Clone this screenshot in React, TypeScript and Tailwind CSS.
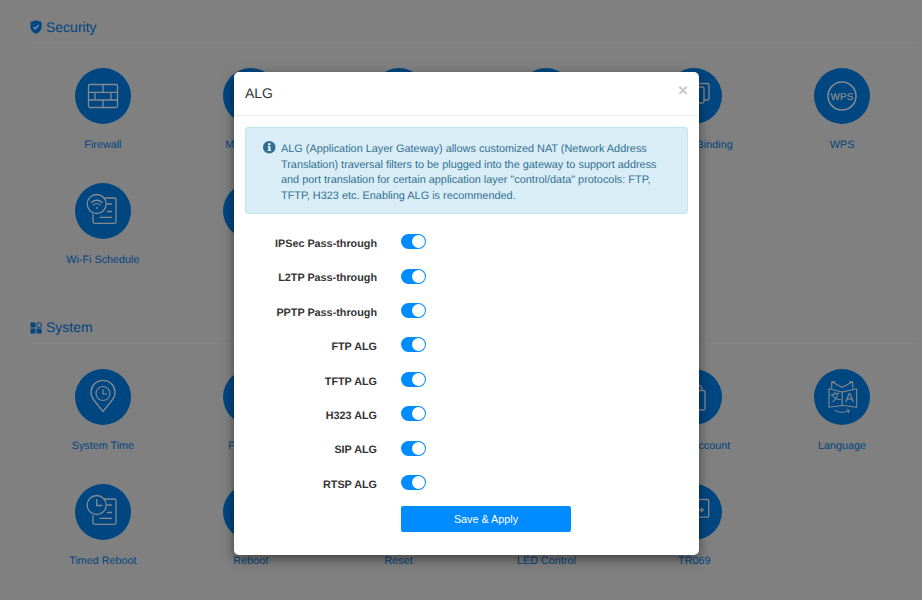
const STROKE = "#848b91";

function Svg({ children }: { children: React.ReactNode }) {
  return (
    <svg width="56" height="56" viewBox="0 0 56 56" fill="none" stroke={STROKE} strokeWidth="1.2" strokeLinecap="round" strokeLinejoin="round">
      {children}
    </svg>
  );
}

const Firewall = () => (
  <Svg>
    <rect x="13.5" y="16.5" width="29" height="23" rx="1.5" strokeWidth="1.3" />
    <path d="M13.5 24.3H42.5M13.5 32H42.5M28 16.5V24.3M28 32V39.5M20 24.3V32M36 24.3V32" strokeWidth="1.3" />
  </Svg>
);

const DocBase = () => (
  <path d="M29 15H39.5A1.5 1.5 0 0 1 41 16.5V38.8A1.5 1.5 0 0 1 39.5 40.3H19.5A1.5 1.5 0 0 1 18 38.8V31.5M32.5 21H36.5M32.5 28.5H36.5M25 34.3H36.5" strokeWidth="1.3" />
);

const WifiSchedule = () => (
  <Svg>
    <DocBase />
    <circle cx="21.7" cy="21" r="9.5" strokeWidth="1.3" />
    <path d="M16.5 19.5C19.5 16.5 24 16.5 27 19.5M18.5 22C20.3 20.2 23.2 20.2 25 22" strokeWidth="1.3" />
    <circle cx="21.7" cy="25" r="0.9" fill={STROKE} stroke="none" />
  </Svg>
);

const TimedReboot = () => (
  <Svg>
    <DocBase />
    <circle cx="21.7" cy="21" r="9.5" strokeWidth="1.3" />
    <path d="M21.7 15.5V21.5H27" strokeWidth="1.3" />
  </Svg>
);

const SystemTime = () => (
  <Svg>
    <path d="M28 42.5L18.8 31A12 12 0 1 1 37.2 31Z" strokeWidth="1.3" />
    <circle cx="28" cy="24.5" r="7" strokeWidth="1.2" />
    <path d="M28 20.5V25H32" strokeWidth="1.2" />
  </Svg>
);

const Wps = () => (
  <Svg>
    <circle cx="28" cy="28" r="14" strokeWidth="1.5" />
    <text x="28" y="31.5" textAnchor="middle" fill={STROKE} stroke={STROKE} strokeWidth="0.25" fontSize="10" fontFamily="'Liberation Sans', sans-serif">
      WPS
    </text>
  </Svg>
);

const Language = () => (
  <Svg>
    <path d="M17.7 19V12.8L28.2 18.2L38.7 12.8V19M21 12.8H17.7M35.4 12.8H38.7" strokeWidth="1.1" />
    <path d="M28.2 36.5L15 38.2V19.8L28.2 23L42.7 19.8V38.2Z" strokeWidth="1.1" />
    <path d="M28.2 23V36.5" strokeWidth="1.1" />
    <text x="35.3" y="33" textAnchor="middle" fill={STROKE} stroke="none" fontSize="13" fontFamily="'Liberation Sans', sans-serif">
      A
    </text>
    <text x="21.5" y="31.5" textAnchor="middle" fill={STROKE} stroke="none" fontSize="10.5" transform="rotate(-14 21.5 28)" fontFamily="'Noto Sans CJK SC', sans-serif">
      文
    </text>
    <path d="M20.3 41C24 44 31 44 35 41.5M32.6 40.8L35.3 41.2L34.5 43.6" strokeWidth="1" />
  </Svg>
);

const Binding = () => (
  <Svg>
    <rect x="20" y="19" width="18" height="16" rx="1.5" strokeWidth="1.3" />
    <path d="M25 19V17A1.5 1.5 0 0 1 26.5 15.5H41.5A1.5 1.5 0 0 1 43 17V30.5A1.5 1.5 0 0 1 41.5 32H38" strokeWidth="1.3" />
  </Svg>
);

const Account = () => (
  <Svg>
    <rect x="19" y="21.5" width="20" height="19.5" rx="1.5" strokeWidth="1.3" />
    <path d="M29 21.5V20A3.5 3.5 0 0 1 36 20V21.5" strokeWidth="1.3" />
  </Svg>
);

const Tr069 = () => (
  <Svg>
    <rect x="16" y="15.5" width="26.7" height="17.7" rx="1" strokeWidth="1.3" />
    <path d="M32 26H37M35.3 24.2L37.3 26L35.3 27.8" strokeWidth="1.3" />
  </Svg>
);

type Item = { label: string; icon?: React.ReactNode };

function Tile({ label, icon }: Item) {
  return (
    <div className="flex flex-col items-center">
      <div className="h-14 w-14 rounded-full bg-[#004680]">{icon}</div>
      <div className="mt-[15px] text-[10.8px] leading-[13px] whitespace-nowrap text-[#004680]">{label}</div>
    </div>
  );
}

function Section({ title, icon, items }: { title: string; icon: React.ReactNode; items: Item[] }) {
  return (
    <section className="h-[300.5px] pl-[29px] pr-[6px]">
      <div className="ml-px flex h-[43px] items-center gap-[4px] border-b border-[#858585] pt-[12px] text-[14px] text-[#004680]">
        {icon}
        <span>{title}</span>
      </div>
      <div className="mt-[25px] grid grid-cols-6 auto-rows-[115px]">
        {items.map((it, i) => (
          <Tile key={i} {...it} />
        ))}
      </div>
    </section>
  );
}

const ShieldIcon = (
  <svg width="12" height="14" viewBox="0 0 12 14">
    <path d="M6 0.2L11.5 2V7C11.5 10.3 9 12.7 6 13.8C3 12.7 0.5 10.3 0.5 7V2Z" fill="#004680" />
    <path d="M3.5 7L5.3 8.8L8.6 5" fill="none" stroke="#8a9aa8" strokeWidth="1.2" />
  </svg>
);

const GridIcon = (
  <svg width="12" height="12" viewBox="0 0 12 12">
    <rect x="0.5" y="0.5" width="5" height="5" rx="0.5" fill="#004680" />
    <rect x="7" y="1" width="4.2" height="4.2" rx="0.5" fill="none" stroke="#004680" />
    <rect x="0.5" y="6.6" width="5" height="5" rx="0.5" fill="#004680" />
    <rect x="6.6" y="6.6" width="5" height="5" rx="0.5" fill="#004680" />
  </svg>
);

const security: Item[] = [
  { label: "Firewall", icon: <Firewall /> },
  { label: "MAC Filter" },
  { label: "" },
  { label: "" },
  { label: "IP-MAC Binding", icon: <Binding /> },
  { label: "WPS", icon: <Wps /> },
  { label: "Wi-Fi Schedule", icon: <WifiSchedule /> },
  { label: "" },
];

const system: Item[] = [
  { label: "System Time", icon: <SystemTime /> },
  { label: "Firmware" },
  { label: "" },
  { label: "" },
  { label: "Admin Account", icon: <Account /> },
  { label: "Language", icon: <Language /> },
  { label: "Timed Reboot", icon: <TimedReboot /> },
  { label: "Reboot" },
  { label: "Reset" },
  { label: "LED Control" },
  { label: "TR069", icon: <Tr069 /> },
];

const rows = [
  "IPSec Pass-through",
  "L2TP Pass-through",
  "PPTP Pass-through",
  "FTP ALG",
  "TFTP ALG",
  "H323 ALG",
  "SIP ALG",
  "RTSP ALG",
];

function Toggle() {
  return (
    <div className="-mt-[3px] flex h-[15px] w-[25px] items-center justify-end rounded-full bg-[#008cff] pr-px">
      <div className="h-[13px] w-[13px] rounded-full bg-white" />
    </div>
  );
}

export default function App() {
  return (
    <div className="relative h-[600px] w-[922px] overflow-hidden bg-[#808080] font-['Liberation_Sans',sans-serif] [text-rendering:geometricPrecision]">
      <Section title="Security" icon={ShieldIcon} items={security} />
      <Section title="System" icon={GridIcon} items={system} />

      <div className="absolute left-[234px] top-[72px] h-[483px] w-[465px] rounded-[5px] bg-white shadow-[0_4px_12px_rgba(0,0,0,0.5)]">
        <div className="flex h-[44px] items-center justify-between border-b border-[#eeeeee] pl-[11px] pr-[11px]">
          <h2 className="text-[14px] text-[#333333]">ALG</h2>
          <span className="-mt-[7px] text-[17px] font-bold leading-none text-[#c8c8c8]">×</span>
        </div>
        <div className="px-[11px] pt-[11px]">
          <div className="flex h-[87px] w-[443px] gap-[5.5px] rounded-[3px] border border-[#bce8f1] bg-[#d9edf7] pl-[17px] pt-[13px] text-[10.9px] leading-[15.6px] whitespace-nowrap text-[#31708f]">
            <svg className="shrink-0" width="12.5" height="12.5" viewBox="0 0 12 12">
              <circle cx="6" cy="6" r="6" fill="#31708f" />
              <rect x="5" y="5" width="2.2" height="4.4" fill="#d9edf7" />
              <rect x="4.4" y="8.6" width="3.4" height="1" fill="#d9edf7" />
              <rect x="4.4" y="5" width="1.5" height="0.9" fill="#d9edf7" />
              <circle cx="6" cy="3.2" r="1.2" fill="#d9edf7" />
            </svg>
            <p className="pt-px">
              ALG (Application Layer Gateway) allows customized NAT (Network Address
              <br />
              Translation) traversal filters to be plugged into the gateway to support address
              <br />
              and port translation for certain application layer "control/data" protocols: FTP,
              <br />
              TFTP, H323 etc. Enabling ALG is recommended.
            </p>
          </div>
          <div className="mt-[12px] flex flex-col">
            {rows.map((r) => (
              <div key={r} className="flex h-[34.4px] items-center">
                <div className="w-[132px] pt-[2px] text-right text-[10.8px] font-bold text-[#333333]">{r}</div>
                <div className="ml-[24px]">
                  <Toggle />
                </div>
              </div>
            ))}
          </div>
          <button className="ml-[156px] mt-[5px] h-[26px] w-[170px] rounded-[2px] bg-[#008cff] text-[10.8px] text-white">
            Save &amp; Apply
          </button>
        </div>
      </div>
    </div>
  );
}
